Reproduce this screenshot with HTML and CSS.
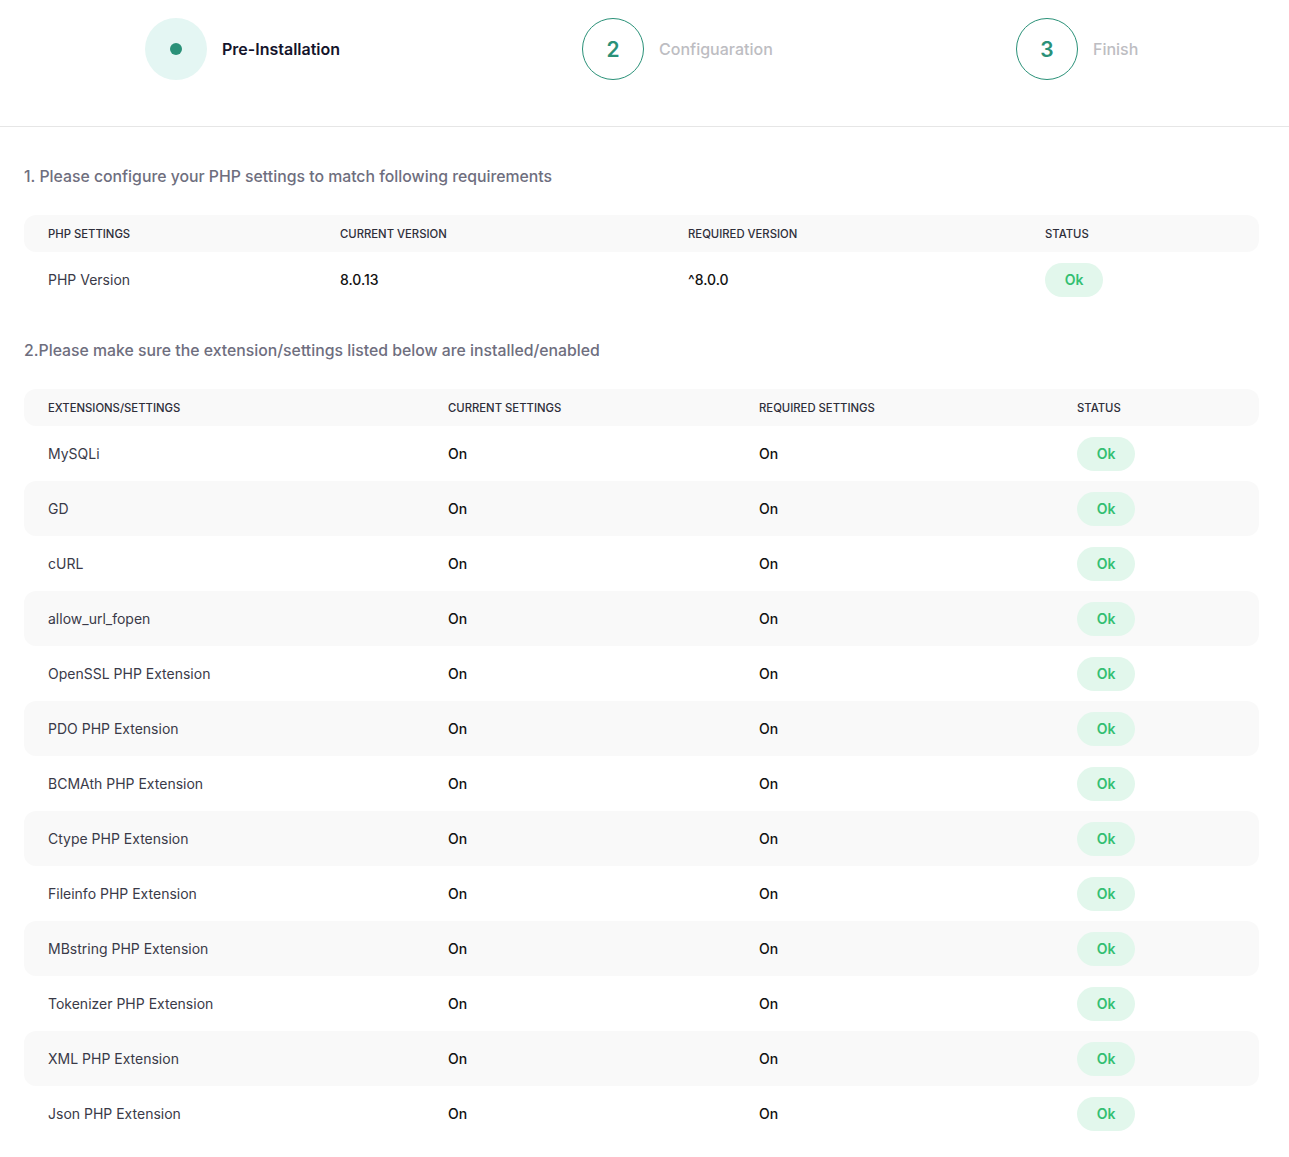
FILE: index.html
```html
<!DOCTYPE html>
<html lang="en">
<head>
    <meta charset="UTF-8">
    <meta name="viewport" content="width=device-width, initial-scale=1.0">
    <title>Installer - Pre-Installation</title>
    <link rel="stylesheet" href="styles.css">
</head>
<body>

<div class="steps">
    <div class="step active">
        <div class="step-circle"><span class="dot"></span></div>
        <div class="step-label">Pre-Installation</div>
    </div>
    <div class="step">
        <div class="step-circle">2</div>
        <div class="step-label">Configuaration</div>
    </div>
    <div class="step">
        <div class="step-circle">3</div>
        <div class="step-label">Finish</div>
    </div>
</div>

<div class="content">
    <h4 class="section-title">1. Please configure your PHP settings to match following requirements</h4>
    <table class="req-table php-table">
        <colgroup>
            <col style="width:292px">
            <col style="width:348px">
            <col style="width:357px">
            <col>
        </colgroup>
        <thead>
            <tr>
                <th>PHP Settings</th>
                <th>Current Version</th>
                <th>Required Version</th>
                <th>Status</th>
            </tr>
        </thead>
        <tbody>
            <tr>
                <td>PHP Version</td>
                <td class="val">8.0.13</td>
                <td class="val">^8.0.0</td>
                <td><span class="badge">Ok</span></td>
            </tr>
        </tbody>
    </table>

    <h4 class="section-title">2.Please make sure the extension/settings listed below are installed/enabled</h4>
    <table class="req-table ext-table">
        <colgroup>
            <col style="width:400px">
            <col style="width:311px">
            <col style="width:318px">
            <col>
        </colgroup>
        <thead>
            <tr>
                <th>Extensions/Settings</th>
                <th>Current Settings</th>
                <th>Required Settings</th>
                <th>Status</th>
            </tr>
        </thead>
        <tbody>
            <tr><td>MySQLi</td><td class="val">On</td><td class="val">On</td><td><span class="badge">Ok</span></td></tr>
            <tr><td>GD</td><td class="val">On</td><td class="val">On</td><td><span class="badge">Ok</span></td></tr>
            <tr><td>cURL</td><td class="val">On</td><td class="val">On</td><td><span class="badge">Ok</span></td></tr>
            <tr><td>allow_url_fopen</td><td class="val">On</td><td class="val">On</td><td><span class="badge">Ok</span></td></tr>
            <tr><td>OpenSSL PHP Extension</td><td class="val">On</td><td class="val">On</td><td><span class="badge">Ok</span></td></tr>
            <tr><td>PDO PHP Extension</td><td class="val">On</td><td class="val">On</td><td><span class="badge">Ok</span></td></tr>
            <tr><td>BCMAth PHP Extension</td><td class="val">On</td><td class="val">On</td><td><span class="badge">Ok</span></td></tr>
            <tr><td>Ctype PHP Extension</td><td class="val">On</td><td class="val">On</td><td><span class="badge">Ok</span></td></tr>
            <tr><td>Fileinfo PHP Extension</td><td class="val">On</td><td class="val">On</td><td><span class="badge">Ok</span></td></tr>
            <tr><td>MBstring PHP Extension</td><td class="val">On</td><td class="val">On</td><td><span class="badge">Ok</span></td></tr>
            <tr><td>Tokenizer PHP Extension</td><td class="val">On</td><td class="val">On</td><td><span class="badge">Ok</span></td></tr>
            <tr><td>XML PHP Extension</td><td class="val">On</td><td class="val">On</td><td><span class="badge">Ok</span></td></tr>
            <tr><td>Json PHP Extension</td><td class="val">On</td><td class="val">On</td><td><span class="badge">Ok</span></td></tr>
        </tbody>
    </table>
</div>

</body>
</html>
```

FILE: styles.css
```css
/* installer - pre-installation check */
body {
    margin: 0;
    font-family: Inter, "Noto Sans", Arial, sans-serif;
    color: #2e2e3a;
    background-color: #fff;
}

/* stepper */
.steps {
    display: grid;
    grid-template-columns: 437px 434px 1fr;
    padding: 18px 0 0 145px;
    height: 108px;
    box-sizing: content-box;
    border-bottom: 1px solid #e6e6e6;
}
.step {
    display: flex;
    align-items: center;
    gap: 15px;
    align-self: start;
}
.step-circle {
    width: 62px;
    height: 62px;
    box-sizing: border-box;
    border-radius: 50%;
    border: 1px solid #2a9178;
    display: flex;
    align-items: center;
    justify-content: center;
    color: #2a9178;
    font-size: 21px;
    font-weight: 600;
}
.step.active .step-circle {
    border: 0;
    background-color: #e4f6f3;
}
.dot {
    width: 12px;
    height: 12px;
    border-radius: 50%;
    background-color: #2a9178;
}
.step-label {
    font-size: 16px;
    font-weight: 500;
    color: #bdbdc2;
}
.step.active .step-label {
    color: #14142b;
    font-weight: 600;
}

/* content */
.content {
    padding: 40px 30px 20px 24px;
}
.section-title {
    margin: 0 0 28px;
    font-size: 15.8px;
    font-weight: 500;
    color: #6e6e7e;
    line-height: 20px;
}
.req-table {
    width: 1235px;
    border-collapse: separate;
    border-spacing: 0;
    table-layout: fixed;
    margin-bottom: 34px;
}
.req-table th {
    text-align: left;
    font-size: 11.3px;
    font-weight: 500;
    text-transform: uppercase;
    color: #2e2e3a;
    background-color: #f9f9f9;
    height: 37px;
    padding: 0 0 0 24px;
}
.req-table td {
    font-size: 14px;
    height: 55px;
    padding: 0 0 0 24px;
    color: #3a3a48;
}
.req-table th:first-child,
.req-table td:first-child {
    border-radius: 12px 0 0 12px;
}
.req-table th:last-child,
.req-table td:last-child {
    border-radius: 0 12px 12px 0;
}
.req-table td.val {
    color: #111;
    font-weight: 500;
}
.ext-table tbody tr:nth-child(even) td {
    background-color: #f9f9f9;
}
.badge {
    display: inline-block;
    width: 58px;
    height: 34px;
    line-height: 34px;
    text-align: center;
    border-radius: 17px;
    background-color: #e2f7ec;
    color: #34bf72;
    font-size: 14px;
    font-weight: 600;
}
```
